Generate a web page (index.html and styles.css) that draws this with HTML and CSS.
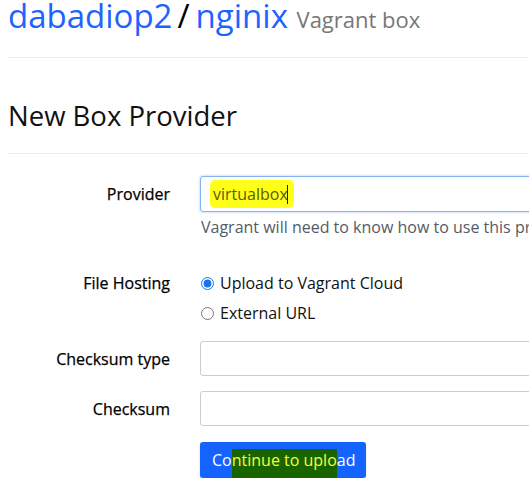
FILE: index.html
```html
<!DOCTYPE html>
<html>
<head>
<meta charset="utf-8">
<link rel="stylesheet" href="styles.css">
</head>
<body>
<div class="page">
  <h1 class="title"><a class="crumb">dabadiop2</a><span class="slash">/</span><a class="crumb">nginix</a> <small class="kind">Vagrant box</small></h1>
  <hr class="rule rule-top">
  <h2 class="section">New Box Provider</h2>
  <hr class="rule rule-bottom">
  <form class="form">
    <div class="row">
      <label class="label">Provider</label>
      <div class="field">
        <div class="input focused"><mark class="hl">virtualbox</mark><span class="caret"></span></div>
      </div>
    </div>
    <p class="help">Vagrant will need to know how to use this provider</p>
    <div class="row row-radio">
      <label class="label label-radio">File Hosting</label>
      <div class="field">
        <label class="radio"><input type="radio" name="host" checked> Upload to Vagrant Cloud</label>
        <label class="radio"><input type="radio" name="host"> External URL</label>
      </div>
    </div>
    <div class="row row-ck1">
      <label class="label">Checksum type</label>
      <div class="field"><div class="input"></div></div>
    </div>
    <div class="row row-ck2">
      <label class="label">Checksum</label>
      <div class="field"><div class="input"></div></div>
    </div>
    <div class="row row-btn">
      <span class="label"></span>
      <div class="field"><button type="button" class="btn">Co<span class="marker">ntinue to uplo</span>ad</button></div>
    </div>
  </form>
</div>
</body>
</html>
```
FILE: styles.css
```css
html, body {
  margin: 0;
  padding: 0;
  background: #fff;
  overflow: hidden;
}
body {
  font-family: "Open Sans", "Noto Sans", sans-serif;
  color: #111;
}
.page {
  width: 760px;
  padding-left: 8px;
}
.title {
  margin: 0;
  font-size: 33px;
  font-weight: 400;
  line-height: 32px;
  white-space: nowrap;
}
.crumb {
  color: #1f63ff;
}
.slash {
  color: #000;
  margin: 0 6px 0 5px;
}
.kind {
  font-size: 22px;
  color: #777;
}
.rule {
  border: 0;
  border-top: 1px solid #ececec;
  margin: 0;
}
.rule-top {
  margin-top: 22px;
}
.section {
  margin: 40px 0 0;
  font-size: 27.5px;
  font-weight: 400;
  line-height: 36px;
  color: #111;
}
.rule-bottom {
  margin-top: 19px;
}
.form {
  margin-top: 22px;
}
.row {
  display: grid;
  grid-template-columns: 162px 1fr;
  column-gap: 30px;
  align-items: center;
}
.label {
  text-align: right;
  font-size: 16px;
  font-weight: 400;
  line-height: 22px;
  color: #000;
  -webkit-text-stroke: 0.25px #000;
}
.input {
  box-sizing: border-box;
  height: 35px;
  border: 1px solid #ccc;
  border-radius: 3px;
  padding: 0 9px;
  display: flex;
  align-items: center;
  font-size: 16px;
}
.focused {
  height: 36px;
  border-color: #80b3f0;
  box-shadow: 0 0 3px rgba(102, 160, 240, 0.55);
}
.hl {
  background: #ffff1a;
  color: #5c5c00;
  padding: 3px 6px 3px 3px;
  border-radius: 5px;
  line-height: 22px;
}
.caret {
  display: inline-block;
  width: 1px;
  height: 19px;
  background: #222;
  margin-left: -7px;
  margin-right: 7px;
}
.help {
  margin: 4px 0 0 193px;
  font-size: 16px;
  line-height: 22px;
  color: #555b66;
  white-space: nowrap;
}
.row-radio {
  margin-top: 30px;
  align-items: start;
}
.label-radio {
  padding-top: 4px;
}
.radio {
  display: flex;
  align-items: center;
  height: 30px;
  font-size: 16px;
  color: #111;
}
.radio input {
  margin: 0 6px 0 1px;
  width: 13px;
  height: 13px;
  accent-color: #1a73e8;
}
.row-ck1 {
  margin-top: 13px;
}
.row-ck2 {
  margin-top: 15px;
}
.row-btn {
  margin-top: 16px;
}
.btn {
  box-sizing: border-box;
  height: 36px;
  width: 166px;
  background: #1563ff;
  border: 0;
  border-radius: 3px;
  color: #fff;
  font-family: "Open Sans", sans-serif;
  font-size: 16px;
  padding: 0 8px 0 12px;
  text-align: left;
  white-space: nowrap;
  box-shadow: 0 1px 2px rgba(0, 0, 0, 0.2);
}
.marker {
  background: #1a6400;
  color: #f4ff3c;
  padding: 0 0 8px;
}
```
